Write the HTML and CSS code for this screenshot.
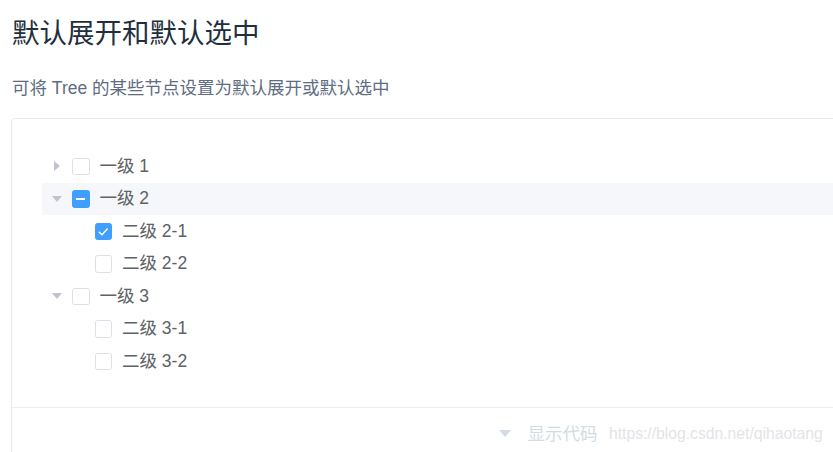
FILE: index.html
```html
<!DOCTYPE html>
<html lang="zh-CN">
<head>
    <meta charset="UTF-8">
    <meta name="viewport" content="width=device-width, initial-scale=1.0">
    <title>默认展开和默认选中</title>
    <link rel="stylesheet" href="styles.css">
</head>
<body>
    <div class="page">
        <h3 class="title">默认展开和默认选中</h3>
        <p class="desc">可将 Tree 的某些节点设置为默认展开或默认选中</p>

        <div class="demo-block">
            <div class="source">
                <div class="tree">
                    <!-- 一级 1 (收起) -->
                    <div class="node">
                        <span class="caret caret-right"></span>
                        <span class="checkbox"></span>
                        <span class="label">一级 1</span>
                    </div>

                    <!-- 一级 2 (展开, 半选) -->
                    <div class="node is-current">
                        <span class="caret caret-down"></span>
                        <span class="checkbox is-indeterminate"></span>
                        <span class="label">一级 2</span>
                    </div>
                    <div class="node level-2">
                        <span class="caret is-leaf"></span>
                        <span class="checkbox is-checked">
                            <svg viewBox="0 0 18 18"><path d="M4 9.2l3.4 3.2 6-6.6" /></svg>
                        </span>
                        <span class="label">二级 2-1</span>
                    </div>
                    <div class="node level-2">
                        <span class="caret is-leaf"></span>
                        <span class="checkbox"></span>
                        <span class="label">二级 2-2</span>
                    </div>

                    <!-- 一级 3 -->
                    <div class="node">
                        <span class="caret caret-down"></span>
                        <span class="checkbox"></span>
                        <span class="label">一级 3</span>
                    </div>
                    <div class="node level-2">
                        <span class="caret is-leaf"></span>
                        <span class="checkbox"></span>
                        <span class="label">二级 3-1</span>
                    </div>
                    <div class="node level-2">
                        <span class="caret is-leaf"></span>
                        <span class="checkbox"></span>
                        <span class="label">二级 3-2</span>
                    </div>
                </div>
            </div>

            <div class="control">
                <span class="control-caret"></span>
                <span class="control-text">显示代码</span>
            </div>
        </div>
    </div>

    <div class="watermark">https://blog.csdn.net/qihaotang</div>
</body>
</html>
```

FILE: styles.css
```css
* {
    margin: 0;
    padding: 0;
    box-sizing: border-box;
}

body {
    font-family: "Liberation Sans", "Noto Sans CJK SC", sans-serif;
    background: #fff;
    overflow: hidden;
    width: 833px;
    height: 452px;
    position: relative;
}

.page {
    padding: 17px 0 0 12px;
    overflow: hidden;
}

.title {
    font-size: 27.5px;
    line-height: 33px;
    font-weight: 400;
    color: #1f2f3d;
}

.desc {
    margin-top: 25px;
    font-size: 17.5px;
    line-height: 26px;
    color: #5e6d82;
}

.demo-block {
    margin-top: 17px;
    margin-left: -1px;
    width: 1074px;
    border: 1px solid #ebebeb;
    border-radius: 4px;
}

.source {
    padding: 31px 30px 29px;
}

.tree {
    color: #606266;
    font-size: 17.5px;
}

.node {
    display: flex;
    align-items: center;
    height: 32.5px;
}

.node.is-current {
    background: #f5f7fa;
}

.node.level-2 {
    padding-left: 22.5px;
}

.caret {
    width: 30px;
    height: 30px;
    display: flex;
    align-items: center;
    justify-content: center;
}

.caret::before {
    content: "";
    display: block;
    width: 0;
    height: 0;
}

.caret-right::before {
    border-top: 5px solid transparent;
    border-bottom: 5px solid transparent;
    border-left: 6px solid #c0c4cc;
}

.caret-down::before {
    border-left: 5.5px solid transparent;
    border-right: 5.5px solid transparent;
    border-top: 6px solid #c0c4cc;
}

.checkbox {
    width: 17.5px;
    height: 17.5px;
    border: 1px solid #dcdfe6;
    border-radius: 2.5px;
    background: #fff;
    margin-right: 10px;
    display: flex;
    align-items: center;
    justify-content: center;
}

.checkbox.is-checked,
.checkbox.is-indeterminate {
    background: #409eff;
    border-color: #409eff;
}

.checkbox.is-indeterminate::before {
    content: "";
    display: block;
    width: 9px;
    height: 2px;
    background: #fff;
}

.checkbox svg {
    width: 17px;
    height: 17px;
    flex-shrink: 0;
    fill: none;
    stroke: #fff;
    stroke-width: 1.4;
}

.label {
    line-height: 1;
}

.control {
    height: 50px;
    border-top: 1px solid #eaeefb;
    display: flex;
    align-items: center;
    justify-content: center;
    gap: 17px;
    color: #d3dce6;
}

.control-caret {
    width: 0;
    height: 0;
    border-left: 6px solid transparent;
    border-right: 6px solid transparent;
    border-top: 7px solid #d3dce6;
    margin-top: 3px;
}

.control-text {
    font-size: 17.5px;
}

.watermark {
    position: absolute;
    left: 609px;
    top: 425px;
    font-family: "Liberation Sans", sans-serif;
    font-size: 15.7px;
    color: #e3e4e8;
    white-space: nowrap;
}
```
